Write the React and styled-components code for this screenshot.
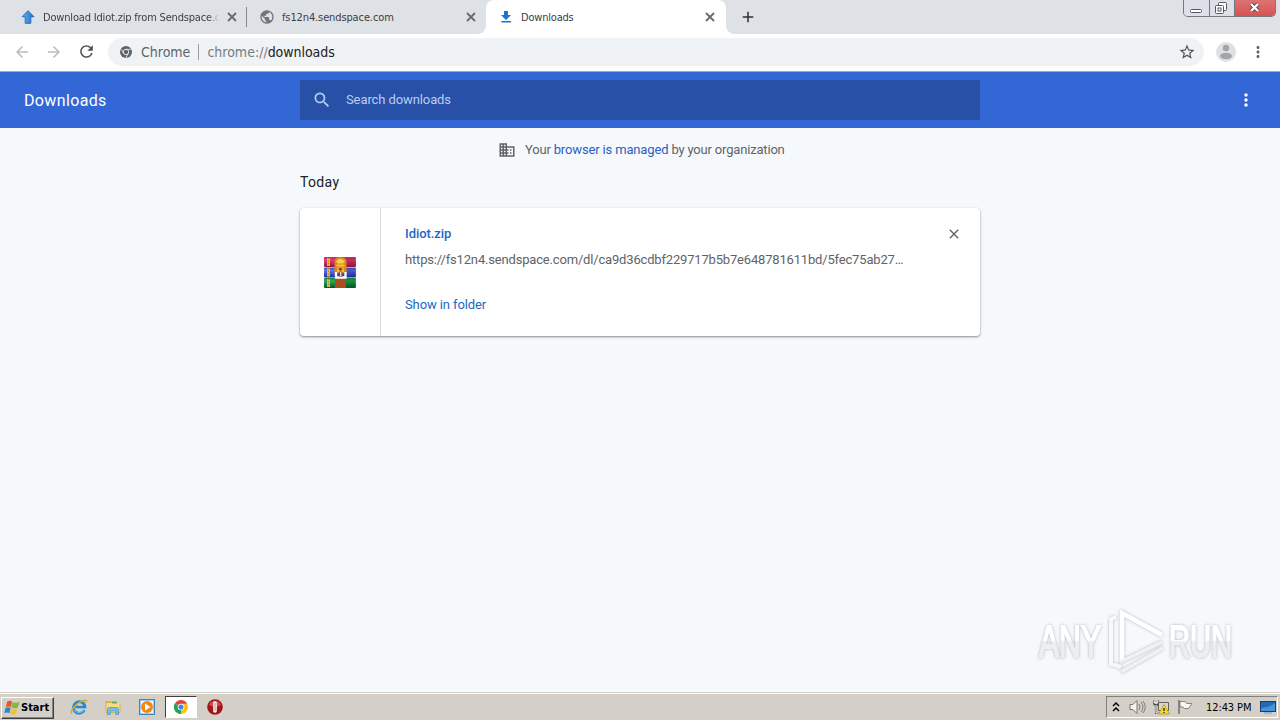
import styled, { createGlobalStyle } from 'styled-components'
import { MdArrowBack, MdArrowForward, MdRefresh, MdStarBorder, MdMoreVert, MdSearch, MdClose, MdPublic, MdDomain, MdAdd } from 'react-icons/md'

const GlobalStyle = createGlobalStyle`
  * {
    box-sizing: border-box;
  }
  body {
    margin: 0;
    overflow: hidden;
  }
  svg {
    display: block;
    flex-shrink: 0;
  }
`
const Screen = styled.div`
  width: 1280px;
  height: 720px;
  display: flex;
  flex-direction: column;
  background: #f5f9fc;
  font-family: Roboto, sans-serif;
`
const Text = styled.span`
  white-space: nowrap;
  font-size: ${p => p.$size || 13}px;
  letter-spacing: ${p => p.$spacing || 0}px;
  color: ${p => p.$color || 'inherit'};
  font-weight: ${p => p.$weight || 400};
`
const TahomaText = styled(Text)`
  font-family: "DejaVu Sans Condensed", "DejaVu Sans", sans-serif;
  font-stretch: condensed;
`

const TabStrip = styled.div`
  height: 34px;
  display: flex;
  background: #dee1e6;
  color: #3c4043;
`
const Tab = styled.div`
  position: relative;
  width: ${p => p.$width}px;
  height: 34px;
  padding: 0 ${p => p.$right || 9}px 0 ${p => p.$left}px;
  display: flex;
  align-items: center;
  background: ${p => (p.$active ? '#fff' : 'transparent')};
  border-radius: 8px 8px 0 0;
  &::before, &::after {
    content: ${p => (p.$active ? '""' : 'none')};
    position: absolute;
    bottom: 0;
    width: 8px;
    height: 8px;
  }
  &::before {
    left: -8px;
    background: radial-gradient(circle at 0 0, transparent 7.5px, #fff 8px);
  }
  &::after {
    right: -8px;
    background: radial-gradient(circle at 100% 0, transparent 7.5px, #fff 8px);
  }
`
const TabTitle = styled.div`
  flex: 1;
  min-width: 0;
  margin-left: ${p => p.$gap || 7}px;
  margin-right: 7px;
  padding-top: 1px;
  overflow: hidden;
  line-height: 18px;
  display: flex;
  ${p => p.$fade && 'mask-image: linear-gradient(90deg, #000 94%, transparent);'}
`
const TabDivider = styled.div`
  width: 1px;
  height: 20px;
  margin-top: 7px;
  background: #85888d;
`
const NewTab = styled.div`
  margin: 8px 0 0 13px;
  color: #2c2e38;
`
const WindowButtons = styled.div`
  display: flex;
  width: 93px;
  height: 17px;
  margin: 0 4px 0 auto;
  border: 1px solid #74777f;
  border-top: 0;
  border-radius: 0 0 5px 5px;
  overflow: hidden;
`
const WindowButton = styled.div`
  width: ${p => p.$width}px;
  display: flex;
  justify-content: center;
  align-items: flex-end;
  padding-right: ${p => (p.$first ? 0 : 2)}px;
  background: ${p => (p.$close ? 'linear-gradient(#df7272, #d65353)' : '#dde0e6')};
  border-left: ${p => (p.$first ? '0' : '1px solid #74777f')};
`

const Toolbar = styled.div`
  height: 38px;
  display: flex;
  align-items: center;
  padding: 0 13px 2px;
  background: #fff;
  border-bottom: 1px solid #8fb1cf;
  color: #5f6368;
`
const NavIcon = styled.div`
  width: 32px;
  color: ${p => (p.$off ? '#babcbe' : '#505357')};
  &:nth-child(3) {
    width: 31px;
  }
`
const Omnibox = styled.div`
  width: 1096px;
  height: 28px;
  padding: 0 8px 0 12px;
  margin-right: 12px;
  display: flex;
  align-items: center;
  border-radius: 14px;
  background: #f0f3f5;
`
const SiteName = styled(TahomaText)`
  margin-left: 9px;
`
const AddressDivider = styled.div`
  width: 1px;
  height: 16px;
  margin: 0 8px;
  background: #9b9da0;
`
const Push = styled.div`
  flex: 1;
`
const ToolbarMenu = styled.div`
  margin-left: 13px;
`

const Header = styled.header`
  height: 56px;
  display: grid;
  grid-template-columns: 276px 680px 1fr;
  align-items: center;
  padding: 0 24px;
  background: #3367d6;
  color: #fff;
`
const SearchField = styled.div`
  height: 40px;
  display: flex;
  align-items: center;
  padding-left: 12px;
  gap: 14px;
  background: #2850a7;
  color: #bacdf3;
  ${Text} {
    padding-bottom: 2px;
  }
`
const HeaderMenu = styled.div`
  justify-self: end;
`
const Page = styled.main`
  flex: 1;
  width: 680px;
  margin: 0 auto;
`
const Managed = styled.div`
  height: 44px;
  display: flex;
  align-items: center;
  padding-left: 198px;
  color: #5f6368;
  svg {
    margin-right: 9px;
  }
  > ${Text} {
    padding-bottom: 2px;
  }
`
const Day = styled.div`
  height: 36px;
  line-height: 20px;
  color: #202124;
`
const Card = styled.div`
  height: 128px;
  display: flex;
  background: #fff;
  border-radius: 4px;
  box-shadow: 0 1px 2px rgba(60, 64, 67, .45), 0 1px 3px rgba(60, 64, 67, .2);
`
const FileIcon = styled.div`
  width: 81px;
  display: flex;
  align-items: center;
  justify-content: center;
  border-right: 1px solid #d9dadc;
`
const Details = styled.div`
  flex: 1;
  display: flex;
  flex-direction: column;
  padding: 16px 0 0 24px;
  line-height: 20px;
`
const Url = styled.div`
  margin: 6px 0 25px;
  line-height: 20px;
  display: flex;
`
const Remove = styled.div`
  padding: 18px 18px 0 0;
  color: #5f6368;
`

const Watermark = styled.div`
  position: absolute;
  left: 1036px;
  top: 606px;
`
const WatermarkText = styled.text`
  font: 400 45px "Liberation Sans", sans-serif;
  stroke: url(#mark);
  stroke-width: 1.8px;
`

const Taskbar = styled.footer`
  height: 28px;
  display: flex;
  align-items: center;
  padding: 2px 2px 0 1px;
  background: #d4d0c8;
  border-top: 1px solid #d4d0c8;
  box-shadow: inset 0 1px #fff;
`
const StartButton = styled.div`
  width: 53px;
  height: 22px;
  display: flex;
  align-items: center;
  padding-left: 2px;
  gap: 1px;
  border: 1px solid;
  border-color: #fff #404040 #404040 #fff;
  box-shadow: inset -1px -1px #87847e;
  color: #000;
  ${Text} {
    padding-bottom: 1px;
  }
`
const Launchers = styled.div`
  display: flex;
  align-items: center;
  margin: 0 0 1px 8px;
`
const Launcher = styled.div`
  width: ${p => (p.$pressed ? 32 : 34)}px;
  height: 22px;
  display: flex;
  align-items: center;
  justify-content: center;
  margin: ${p => (p.$pressed ? '0 1px' : '0')};
  border: ${p => (p.$pressed ? '1px solid' : '0')};
  border-color: #404040 #fff #fff #404040;
  background: ${p => (p.$pressed ? '#fff' : 'transparent')};
`
const Tray = styled.div`
  width: 172px;
  height: 22px;
  margin: 0 0 1px auto;
  padding: 0 1px 0 5px;
  display: flex;
  align-items: center;
  border: 1px solid;
  border-color: #808080 #fff #fff #808080;
  color: #000;
`
const TrayItem = styled.div`
  width: ${p => p.$width}px;
  flex-shrink: 0;
`
const Clock = styled(TrayItem)`
  display: flex;
`

const CloseIcon = () => (
  <svg width="12" height="12" viewBox="0 0 12 12" stroke="#66696d" strokeWidth="1.8">
    <path d="M2 2l8 8M10 2l-8 8" />
  </svg>
)

const UploadIcon = () => (
  <svg width="14" height="14" viewBox="0 0 14 14">
    <defs>
      <linearGradient id="up" x1="0" x2="1">
        <stop offset="0" stopColor="#67b5f5" />
        <stop offset="1" stopColor="#176bce" />
      </linearGradient>
    </defs>
    <path d="M7 .7l6 6.1H9.8v6.5H4.2V6.8H1z" fill="url(#up)" stroke="#2766b3" strokeWidth=".9" />
  </svg>
)

const DownloadIcon = () => (
  <svg width="16" height="16" viewBox="0 0 16 16" fill="#1a73d8">
    <path d="M6 2h4v4h3L8 11 3 6h3zM3.3 12h9.6v1.6H3.3z" />
  </svg>
)

const ChromeMono = () => (
  <svg width="12" height="12" viewBox="0 0 12 12">
    <circle cx="6" cy="6" r="6" fill="#5f6368" />
    <circle cx="6" cy="6" r="2.7" fill="none" stroke="#f0f3f5" strokeWidth=".9" />
    <path d="M6 3.3h5.2M3.6 7.3L1.1 3.2M8.3 7.4L5.8 12" stroke="#f0f3f5" strokeWidth=".8" />
  </svg>
)

const ChromeIcon = () => (
  <svg width="14" height="14" viewBox="0 0 16 16">
    <path d="M8 8L1.1 4A8 8 0 0 1 14.9 4z" fill="#e14435" />
    <path d="M8 8L14.9 4A8 8 0 0 1 8 16z" fill="#fbc116" />
    <path d="M8 8L8 16A8 8 0 0 1 1.1 4z" fill="#23a455" />
    <path d="M8 4.4h7.1L11 10z" fill="#fbc116" />
    <path d="M4.8 9.8l3.5 1.8L6.8 15.9A8 8 0 0 1 1.1 4z" fill="#23a455" />
    <circle cx="8" cy="8" r="3.8" fill="#fff" />
    <circle cx="8" cy="8" r="2.9" fill="#4285e8" />
  </svg>
)

const Avatar = () => (
  <svg width="20" height="20" viewBox="0 0 20 20">
    <circle cx="10" cy="10" r="10" fill="#dfe0e2" />
    <circle cx="10" cy="6" r="3.2" fill="#a2a4a6" />
    <ellipse cx="10" cy="14" rx="6" ry="3.2" fill="#a2a4a6" />
  </svg>
)

const books = [
  { y: 0, light: '#e43b80', mid: '#c22657', dark: '#8c1735' },
  { y: 10.5, light: '#6572e0', mid: '#3e4dcc', dark: '#242c8c' },
  { y: 21, light: '#2fac5b', mid: '#138040', dark: '#075526' },
]

const ArchiveIcon = () => (
  <svg width="32" height="31" viewBox="0 0 32 31">
    <defs>
      {books.map(b => (
        <linearGradient key={b.y} id={`book${b.y * 2}`} x1="0" y1="0" x2="0" y2="1">
          <stop offset="0" stopColor={b.mid} />
          <stop offset=".3" stopColor={b.light} />
          <stop offset=".65" stopColor={b.mid} />
          <stop offset="1" stopColor={b.dark} />
        </linearGradient>
      ))}
    </defs>
    {books.map(b => (
      <g key={b.y}>
        <rect x="0" y={b.y} width="32" height="10" rx="1" fill={`url(#book${b.y * 2})`} />
        <path d={`M21 ${b.y + 1}h10v8H21z`} fill={b.dark} opacity=".35" />
        <path d={`M4.5 ${b.y + 1}v8`} stroke="#edb72c" strokeWidth="3" />
        <path d={`M4.5 ${b.y + 1}v8`} stroke="#8f6a2a" strokeWidth=".8" strokeDasharray="1 1.5" />
      </g>
    ))}
    <path d="M10.5 5q0-5 6-5t6 5v11h-12z" fill="#dc8719" />
    <path d="M12 4.5q4-5.5 9 0l-2 2h-5z" fill="#f8d057" />
    <path d="M12.5 8.5h8M13 14h7" stroke="#ffbd3c" strokeWidth="2" />
    <path d="M13 11.5h7" stroke="#f2a526" strokeWidth="2" />
    <rect x="15.2" y="11" width="2.5" height="2.5" fill="#68421c" />
    <rect x="11" y="21" width="11" height="10" fill="#a7501e" />
    <path d="M12 15v5.5h9.5V15" fill="none" stroke="#fff" strokeWidth="2.3" />
    <path d="M16.7 14.5v5" stroke="#7c4a22" strokeWidth="3" />
    <path d="M16.7 15v4" stroke="#efe6dc" strokeWidth="1.3" />
  </svg>
)

const WindowsFlag = () => (
  <svg width="16" height="16" viewBox="0 0 16 16">
    <path d="M3.2 1.6q2.4-1.5 5 0L6.9 7.2Q4.4 5.7 1.8 7.2z" fill="#e9572d" />
    <path d="M8.8 2q2.8 1.3 6.7 0l-1.8 5.8q-3.2 1.2-6.2-.2z" fill="#7fba3e" />
    <path d="M1.5 8Q4 6.5 6.7 7.9L5.3 13.2q-2.4-1.4-5.1.1z" fill="#2d87d0" />
    <path d="M7.3 8.4q2.9 1.3 6.2.1L11.9 14q-3.4 1.3-6-.2z" fill="#f6c22f" />
  </svg>
)

const ExplorerIcon = () => (
  <svg width="18" height="18" viewBox="0 0 18 18" fill="none">
    <path d="M14.4 12.1A5.8 5.8 0 1 1 15 9H5.2" stroke="#238bd2" strokeWidth="2.7" />
    <path d="M14 11.6A5.8 5.8 0 0 1 4 12" stroke="#69c2ed" strokeWidth="1.1" />
    <path d="M2.2 15.3C-.8 13.8 5 7.1 10 4.2c4-2.5 7.5-3 6.1.2" stroke="#dba62c" strokeWidth="1.5" />
  </svg>
)

const FolderIcon = () => (
  <svg width="18" height="18" viewBox="0 0 18 18">
    <path d="M1.5 3h5.5l1 2h8.5v10h-15z" fill="#d9b14c" />
    <path d="M2.5 5h13v9h-13z" fill="#f5dd83" />
    <path d="M8 3.5h5v2H8z" fill="#69ac51" />
    <path d="M3.5 16.5v-5q0-2 2-2h7q2 0 2 2v5h-2.7v-3.5H6.2v3.5z" fill="#74bde8" stroke="#4194c9" strokeWidth=".7" />
  </svg>
)

const PlayerIcon = () => (
  <svg width="16" height="16" viewBox="0 0 16 16">
    <rect x=".5" y=".5" width="15" height="15" fill="#a2cdf0" stroke="#4184bd" />
    <rect x="2" y="2" width="12" height="12" fill="#f7fbff" />
    <circle cx="8" cy="8" r="6" fill="#ee8918" />
    <path d="M6 4.4l5.5 3.6L6 11.6z" fill="#fff" />
  </svg>
)

const OperaIcon = () => (
  <svg width="16" height="16" viewBox="0 0 16 16">
    <circle cx="8" cy="8" r="7.8" fill="#9d1719" />
    <path d="M2 6a6.4 6.4 0 0 1 12 0Q8 10 2 6z" fill="#d2474a" />
    <rect x="6.2" y="2.3" width="3.6" height="11.4" rx="1.8" fill="#fff" />
    <path d="M8 4v8" stroke="#c77c7c" />
  </svg>
)

const SpeakerIcon = () => (
  <svg width="17" height="16" viewBox="0 0 17 16" fill="none" stroke="#77756f">
    <path d="M1 5.5h3l4-4v13l-4-4H1z" fill="#f7f6f2" />
    <path d="M10 5q2 3 0 6M12 3q4 5 0 10M14 2q4.5 6 0 12" strokeWidth=".9" />
  </svg>
)

const NetworkIcon = () => (
  <svg width="17" height="16" viewBox="0 0 17 16">
    <path d="M5.5 3.5h10v8h-10z" fill="#d8d5ce" stroke="#66635c" />
    <path d="M1 1v3q0 2 2 2t2-2V1M3 6v8h5" fill="none" stroke="#55534e" strokeWidth="2.2" />
    <path d="M1.2 1v3h3.6V1M3 6v8h4" fill="none" stroke="#fff" />
    <path d="M11 5.5l5.5 9.5h-11z" fill="#f5dc27" stroke="#af910c" strokeWidth=".7" />
    <path d="M11 9v3M11 13v1" stroke="#252109" strokeWidth="1.3" />
  </svg>
)

const TrayFlag = () => (
  <svg width="17" height="16" viewBox="0 0 17 16">
    <path d="M3 2.5h5.3l1.4 2h5.1l-3.2 5H7.4L6 8H3z" fill="#f9f8f4" stroke="#85827c" />
    <path d="M2 1v14" stroke="#716e67" strokeWidth="1.5" />
  </svg>
)

const DesktopIcon = () => (
  <svg width="16" height="16" viewBox="0 0 16 16">
    <rect x=".5" y="2.5" width="15" height="10" fill="#2368b9" stroke="#183d72" />
    <path d="M1 9Q9 9 15 4v8H1z" fill="#4493dd" />
    <path d="M4 14h8" stroke="#a1b4cb" strokeWidth="2" />
  </svg>
)

const AnyRun = () => (
  <svg width="216" height="76" viewBox="0 0 216 76">
    <defs>
      <linearGradient id="mark" gradientUnits="userSpaceOnUse" x1="0" y1="16" x2="0" y2="54">
        <stop offset=".48" stopColor="#fff" />
        <stop offset=".52" stopColor="#eceeef" />
      </linearGradient>
      <filter id="soft" x="-10%" y="-20%" width="120%" height="140%">
        <feDropShadow dx="0" dy="0" stdDeviation="1.6" floodColor="#8c949b" floodOpacity=".7" />
      </filter>
    </defs>
    <g filter="url(#soft)" fill="url(#mark)">
      <WatermarkText x="3" y="51" textLength="62" lengthAdjust="spacingAndGlyphs">ANY</WatermarkText>
      <WatermarkText x="133" y="51" textLength="63" lengthAdjust="spacingAndGlyphs">RUN</WatermarkText>
    </g>
    <g filter="url(#soft)" fill="none">
      <path d="M80 11l-5 2v45l10 3" stroke="#f7f8f8" strokeWidth="4" />
      <path d="M86 56V7l40 22" stroke="#fff" strokeWidth="4.5" />
      <path d="M84 56l42-20M85 66l42-24" stroke="#eff1f2" strokeWidth="3.5" />
    </g>
  </svg>
)

const Tabs = () => (
  <TabStrip>
    <Tab $width={246} $left={21} $right={8}>
      <UploadIcon />
      <TabTitle $gap={8} $fade><TahomaText $size={11} $spacing={-0.18}>Download Idiot.zip from Sendspace.c</TahomaText></TabTitle>
      <CloseIcon />
    </Tab>
    <TabDivider />
    <Tab $width={239} $left={12}>
      <MdPublic size={16} color="#737679" />
      <TabTitle><TahomaText $size={11} $spacing={-0.12}>fs12n4.sendspace.com</TahomaText></TabTitle>
      <CloseIcon />
    </Tab>
    <Tab $width={240} $left={12} $right={10} $active>
      <DownloadIcon />
      <TabTitle><TahomaText $size={11} $spacing={-0.2}>Downloads</TahomaText></TabTitle>
      <CloseIcon />
    </Tab>
    <NewTab><MdAdd size={18} /></NewTab>
    <WindowButtons>
      <WindowButton $width={25} $first>
        <svg width="13" height="8" viewBox="0 0 13 8"><rect x=".5" y="1.5" width="11" height="3" rx="1" fill="#fff" stroke="#555861" /></svg>
      </WindowButton>
      <WindowButton $width={26}>
        <svg width="14" height="15" viewBox="0 0 14 15" fill="#fff" stroke="#555861">
          <rect x="4.5" y="1.5" width="8" height="8" rx="1" />
          <rect x="1.5" y="4.5" width="8" height="8" rx="1" />
          <rect x="4" y="7" width="3" height="3" />
        </svg>
      </WindowButton>
      <WindowButton $width={41} $close>
        <svg width="13" height="15" viewBox="0 0 13 15">
          <path d="M3 3l7 7M10 3l-7 7" stroke="#65424b" strokeWidth="4.2" />
          <path d="M3 3l7 7M10 3l-7 7" stroke="#fff" strokeWidth="2.4" />
        </svg>
      </WindowButton>
    </WindowButtons>
  </TabStrip>
)

const AddressBar = () => (
  <Toolbar>
    <NavIcon $off><MdArrowBack size={18} /></NavIcon>
    <NavIcon $off><MdArrowForward size={18} /></NavIcon>
    <NavIcon><MdRefresh size={19} /></NavIcon>
    <Omnibox>
      <ChromeMono />
      <SiteName $size={14} $color="#5f6368">Chrome</SiteName>
      <AddressDivider />
      <TahomaText $size={14} $color="#777b80">chrome://</TahomaText>
      <TahomaText $size={14} $color="#202124" $spacing={-0.05}>downloads</TahomaText>
      <Push />
      <MdStarBorder size={18} color="#505357" />
    </Omnibox>
    <Avatar />
    <ToolbarMenu><MdMoreVert size={18} /></ToolbarMenu>
  </Toolbar>
)

const Downloads = () => (
  <Page>
    <Managed>
      <MdDomain size={18} />
      <Text $spacing={-0.18}>Your <Text $color="#2b5fc0" $spacing={-0.15}>browser is managed</Text> by your organization</Text>
    </Managed>
    <Day><Text $size={14} $spacing={0.35}>Today</Text></Day>
    <Card>
      <FileIcon><ArchiveIcon /></FileIcon>
      <Details>
        <Text $color="#2367c5" $weight={500} $spacing={-0.05}>Idiot.zip</Text>
        <Url><Text $color="#5f6368" $spacing={-0.175}>https://fs12n4.sendspace.com/dl/ca9d36cdbf229717b5b7e648781611bd/5fec75ab27…</Text></Url>
        <Text $color="#2367c5" $spacing={-0.1}>Show in folder</Text>
      </Details>
      <Remove><MdClose size={16} /></Remove>
    </Card>
  </Page>
)

const BottomBar = () => (
  <Taskbar>
    <StartButton>
      <WindowsFlag />
      <TahomaText $size={11} $weight={700}>Start</TahomaText>
    </StartButton>
    <Launchers>
      <Launcher><ExplorerIcon /></Launcher>
      <Launcher><FolderIcon /></Launcher>
      <Launcher><PlayerIcon /></Launcher>
      <Launcher $pressed><ChromeIcon /></Launcher>
      <Launcher><OperaIcon /></Launcher>
    </Launchers>
    <Tray>
      <TrayItem $width={17}>
        <svg width="8" height="12" viewBox="0 0 8 12" fill="none" stroke="#000" strokeWidth="1.5"><path d="M1 5l3-3 3 3M1 10l3-3 3 3" /></svg>
      </TrayItem>
      <TrayItem $width={24}><SpeakerIcon /></TrayItem>
      <TrayItem $width={24}><NetworkIcon /></TrayItem>
      <TrayItem $width={29}><TrayFlag /></TrayItem>
      <Clock $width={54}><TahomaText $size={11} $spacing={-0.1}>12:43 PM</TahomaText></Clock>
      <DesktopIcon />
    </Tray>
  </Taskbar>
)

export default function App() {
  return (<>
    <GlobalStyle />
    <Screen>
      <Tabs />
      <AddressBar />
      <Header>
        <Text $size={16} $spacing={0.36}>Downloads</Text>
        <SearchField>
          <MdSearch size={20} />
          <Text $spacing={-0.1}>Search downloads</Text>
        </SearchField>
        <HeaderMenu><MdMoreVert size={20} /></HeaderMenu>
      </Header>
      <Downloads />
      <BottomBar />
      <Watermark><AnyRun /></Watermark>
    </Screen>
  </>)
}
